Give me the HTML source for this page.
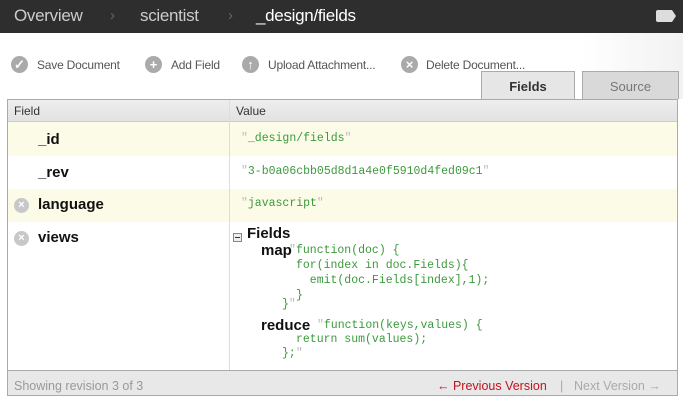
<!DOCTYPE html>
<html><head><style>
*{margin:0;padding:0;box-sizing:border-box}
body{width:683px;height:408px;background:#fff;font-family:"Liberation Sans",sans-serif;position:relative;overflow:hidden}
.a{position:absolute;white-space:nowrap}
.hdr{left:0;top:0;width:683px;height:33px;background:#2e2e2e}
.crumb{top:6px;font-size:17px;color:#ccc;letter-spacing:-0.3px}
.sep{top:7px;font-size:15px;color:#666}
.tb{top:58px;font-size:12px;color:#555;letter-spacing:-0.2px}
.ic{width:17px;height:17px;border-radius:50%;background:#aaa;color:#fff;font-size:13px;line-height:17px;text-align:center;font-weight:bold}
.mono{font-family:"Liberation Mono",monospace;font-size:11.5px;color:#3b9a3b}
.k{font-weight:bold;font-size:15px;color:#111}
.x{width:15px;height:15px;border-radius:50%;background:#c8c8c8;color:#fff;font-size:11px;line-height:15px;text-align:center;font-weight:bold}
</style></head><body>
<div class="a hdr"></div>
<div class="a crumb" style="left:14px">Overview</div>
<div class="a sep" style="left:110px">›</div>
<div class="a crumb" style="left:140px">scientist</div>
<div class="a sep" style="left:228px">›</div>
<div class="a crumb" style="left:256px;color:#fff">_design/fields</div>
<div class="a" style="left:656px;top:10px;width:20px;height:12px;background:#ddd;border-radius:2px;clip-path:polygon(0 0,80% 0,100% 50%,80% 100%,0 100%)"></div>
<div class="a" style="left:0;top:33px;width:683px;height:66px;background:linear-gradient(90deg,#fff 85%,#f2f2f2)"></div>

<div class="a ic" style="left:11px;top:56px">✓</div><div class="a tb" style="left:37px">Save Document</div>
<div class="a ic" style="left:145px;top:56px">+</div><div class="a tb" style="left:171px">Add Field</div>
<div class="a ic" style="left:242px;top:56px">↑</div><div class="a tb" style="left:268px">Upload Attachment...</div>
<div class="a ic" style="left:401px;top:56px">×</div><div class="a tb" style="left:426px">Delete Document...</div>

<div class="a" style="left:481px;top:71px;width:94px;height:29px;background:#e6e6e6;border:1px solid #aaa;border-bottom:none;font-size:13px;font-weight:bold;color:#333;text-align:center;line-height:30px">Fields</div>
<div class="a" style="left:582px;top:71px;width:97px;height:28px;background:#d9d9d9;border:1px solid #aaa;border-bottom:none;font-size:13px;color:#777;text-align:center;line-height:30px">Source</div>

<div class="a" style="left:7px;top:99px;width:671px;height:297px;border:1px solid #aaa;background:#fff"></div>
<div class="a" style="left:8px;top:100px;width:669px;height:22px;background:linear-gradient(#eee,#e2e2e2);border-bottom:1px solid #ccc"></div>
<div class="a" style="left:14px;top:104px;font-size:12px;color:#333">Field</div>
<div class="a" style="left:236px;top:104px;font-size:12px;color:#333">Value</div>
<div class="a" style="left:8px;top:122px;width:669px;height:34px;background:#fbfbe8"></div>
<div class="a" style="left:8px;top:189px;width:669px;height:33px;background:#fbfbe8"></div>
<div class="a" style="left:229px;top:100px;width:1px;height:270px;background:#ddd"></div>
<div class="a" style="left:8px;top:370px;width:669px;height:25px;background:#e8e8e8;border-top:1px solid #aaa"></div>

<div class="a k" style="left:38px;top:131px">_id</div>
<div class="a mono" style="left:241px;top:132px"><span style="color:#bbb">"</span>_design/fields<span style="color:#bbb">"</span></div>
<div class="a k" style="left:38px;top:164px">_rev</div>
<div class="a mono" style="left:241px;top:165px"><span style="color:#bbb">"</span>3-b0a06cbb05d8d1a4e0f5910d4fed09c1<span style="color:#bbb">"</span></div>
<div class="a x" style="left:14px;top:198px">×</div>
<div class="a k" style="left:38px;top:196px">language</div>
<div class="a mono" style="left:241px;top:197px"><span style="color:#bbb">"</span>javascript<span style="color:#bbb">"</span></div>
<div class="a x" style="left:14px;top:231px">×</div>
<div class="a k" style="left:38px;top:229px">views</div>

<div class="a" style="left:233px;top:233px;width:9px;height:9px;border:1px solid #888;background:#eee"><div style="margin:3px 1px;height:1px;background:#333"></div></div>
<div class="a k" style="left:247px;top:225px">Fields</div>
<div class="a k" style="left:261px;top:242px">map</div>
<div class="a mono" style="left:296px;top:243px;line-height:15px"><span style="color:#bbb;position:absolute;left:-7px">"</span>function(doc) {<br>for(index in doc.Fields){<br>&nbsp;&nbsp;emit(doc.Fields[index],1);<br>}</div>
<div class="a mono" style="left:282px;top:298px">}<span style="color:#bbb">"</span></div>
<div class="a k" style="left:261px;top:317px">reduce</div>
<div class="a mono" style="left:317px;top:319px"><span style="color:#bbb">"</span>function(keys,values) {</div>
<div class="a mono" style="left:296px;top:333px">return sum(values);</div>
<div class="a mono" style="left:282px;top:347px">};<span style="color:#bbb">"</span></div>

<div class="a" style="left:14px;top:379px;font-size:12.5px;color:#999">Showing revision 3 of 3</div>
<div class="a" style="left:437px;top:379px;font-size:12.5px;color:#c0141e">← Previous Version</div>
<div class="a" style="left:560px;top:379px;font-size:12.5px;color:#aaa">|</div>
<div class="a" style="left:574px;top:379px;font-size:12.5px;color:#aaa">Next Version →</div>
</body></html>
